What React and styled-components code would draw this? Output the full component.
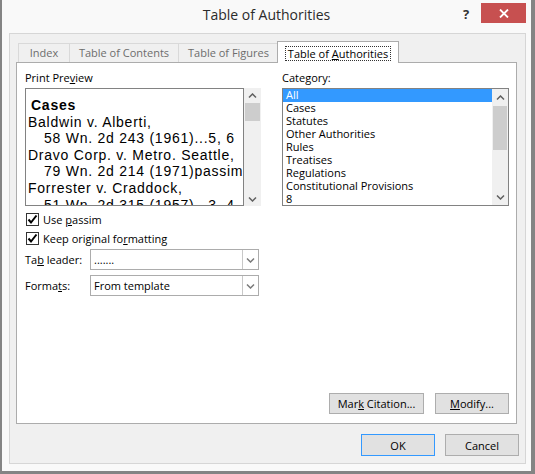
import React from 'react';
import styled, { createGlobalStyle } from 'styled-components';

const GlobalStyle = createGlobalStyle`
  html, body {
    margin: 0;
    padding: 0;
    background: #ffffff;
  }
  body {
    font-family: "Open Sans", "Noto Sans", Arial, sans-serif;
    font-size: 11px;
    color: #000;
  }
`;

const Window = styled.div`
  width: 535px;
  height: 474px;
  box-sizing: border-box;
  background: #f9f9f9;
  border-left: 2px solid #848484;
  border-right: 4px solid #848484;
  border-bottom: 3px solid #848484;
  padding: 0 5px 7px 7px;
  display: flex;
  flex-direction: column;
`;

const TitleBar = styled.div`
  height: 33px;
  flex: none;
  display: grid;
  grid-template-columns: 1fr auto 1fr;
  margin-left: -2px;
`;

const Title = styled.div`
  font-size: 14px;
  color: #2b2b2b;
  line-height: 19px;
  padding-top: 5px;
  white-space: nowrap;
`;

const TitleControls = styled.div`
  display: flex;
  justify-content: flex-end;
  align-items: flex-start;
`;

const HelpButton = styled.div`
  width: 20px;
  margin-right: 5px;
  padding-top: 6px;
  text-align: center;
  font-size: 13px;
  font-weight: 700;
  color: #333;
  line-height: 16px;
`;

const CloseButton = styled.div`
  width: 45px;
  height: 20px;
  margin-top: 3px;
  background: #c75050;
  display: flex;
  align-items: center;
  justify-content: center;
`;

const Frame = styled.div`
  flex: 1;
  box-sizing: border-box;
  background: #f0f0f0;
  border: 1px solid #d6d6d6;
  padding: 7px 7px 7px 6px;
  display: flex;
  flex-direction: column;
`;

const TabRow = styled.div`
  display: flex;
  align-items: flex-end;
  height: 21px;
  padding-left: 2px;
  margin-right: 1px;
  position: relative;
  z-index: 1;
`;

const Tab = styled.div`
  box-sizing: border-box;
  width: ${p => p.$w}px;
  height: ${p => (p.$active ? 22 : 19)}px;
  margin: ${p => (p.$active ? '0 0 -1px -1px' : '0 -1px 0 0')};
  border: 1px solid ${p => (p.$active ? '#acacac' : '#d9d9d9')};
  border-bottom: none;
  background: ${p => (p.$active ? '#ffffff' : '#f0f0f0')};
  color: ${p => (p.$active ? '#000' : '#6d6d6d')};
  display: flex;
  justify-content: center;
  align-items: flex-start;
  padding-top: ${p => (p.$active ? 4 : 0)}px;
  line-height: 18px;
  white-space: nowrap;
  position: relative;
  z-index: ${p => (p.$active ? 2 : 1)};
`;

const FocusLabel = styled.span`
  display: inline-block;
  box-sizing: border-box;
  height: 15px;
  line-height: 13px;
  padding: 0 2px;
  border: 1px dotted #333;
`;

const AccessKey = styled.span`
  text-decoration: underline;
  text-underline-offset: 1px;
`;

const Panel = styled.div`
  box-sizing: border-box;
  height: 362px;
  margin-right: 1px;
  background: #ffffff;
  border: 1px solid #acacac;
  padding: 7px 7px 9px 8px;
  display: flex;
  flex-direction: column;
`;

const Columns = styled.div`
  display: grid;
  grid-template-columns: 236px 227px;
  column-gap: 21px;
  align-items: start;
`;

const Column = styled.div`
  display: flex;
  flex-direction: column;
`;

const FieldLabel = styled.div`
  line-height: 15px;
  height: 15px;
  margin-bottom: 3px;
  white-space: nowrap;
`;

const PreviewRow = styled.div`
  display: flex;
  height: 118px;
`;

const PreviewBox = styled.div`
  box-sizing: border-box;
  width: 219px;
  height: 118px;
  border: 1px solid #828282;
  padding: 8px 0 0 2px;
  overflow: hidden;
  font-family: "Liberation Sans", Arial, sans-serif;
  font-size: 14px;
  letter-spacing: 0.75px;
  line-height: 16.6px;
  color: #000;
`;

const PreviewLine = styled.div`
  white-space: nowrap;
  padding-left: ${p => p.$indent || 0}px;
  font-weight: ${p => (p.$bold ? 700 : 400)};
`;

const ScrollTrack = styled.div`
  box-sizing: border-box;
  width: ${p => p.$w}px;
  height: 100%;
  background: #f0f0f0;
  display: flex;
  flex-direction: column;
  align-items: center;
`;

const ArrowBox = styled.div`
  height: ${p => p.$h}px;
  width: 100%;
  display: flex;
  align-items: center;
  justify-content: center;
  flex: none;
`;

const Thumb = styled.div`
  width: calc(100% - 2px);
  height: ${p => p.$h}px;
  margin-top: ${p => p.$offset}px;
  background: #cdcdcd;
  flex: none;
`;

const TrackFill = styled.div`
  flex: 1;
`;

const ListBox = styled.div`
  box-sizing: border-box;
  height: 118px;
  border: 1px solid #828282;
  display: flex;
  overflow: hidden;
`;

const ListItems = styled.div`
  flex: 1;
  overflow: hidden;
`;

const ListItem = styled.div`
  height: 13px;
  line-height: 12px;
  padding-left: 3px;
  white-space: nowrap;
  background: ${p => (p.$selected ? '#3399ff' : 'transparent')};
  color: ${p => (p.$selected ? '#ffffff' : '#000')};
`;

const Options = styled.div`
  display: flex;
  flex-direction: column;
  margin-top: 5px;
  gap: 2px;
`;

const CheckRow = styled.label`
  display: flex;
  align-items: center;
  height: 17px;
  padding-left: 1px;
  gap: 4px;
  line-height: 15px;
  white-space: nowrap;
`;

const CheckBox = styled.span`
  box-sizing: border-box;
  width: 13px;
  height: 13px;
  border: 1px solid #333;
  background: #fff;
  display: flex;
  align-items: center;
  justify-content: center;
`;

const Selects = styled.div`
  display: flex;
  flex-direction: column;
  gap: 5px;
  margin-top: 2px;
  padding-right: 2px;
`;

const SelectRow = styled.div`
  display: flex;
  align-items: center;
  height: 21px;
`;

const SelectLabel = styled.div`
  width: 65px;
  flex: none;
  white-space: nowrap;
  line-height: 15px;
`;

const Select = styled.div`
  box-sizing: border-box;
  flex: 1;
  height: 21px;
  border: 1px solid #acacac;
  background: #fff;
  display: flex;
`;

const SelectValue = styled.div`
  flex: 1;
  padding-left: 3px;
  line-height: 19px;
  white-space: nowrap;
`;

const SelectArrow = styled.div`
  width: 15px;
  border-left: 1px solid #c8c8c8;
  display: flex;
  align-items: center;
  justify-content: center;
`;

const Spacer = styled.div`
  flex: 1;
`;

const ButtonRow = styled.div`
  display: flex;
  justify-content: flex-end;
  gap: ${p => p.$gap}px;
  margin-top: ${p => p.$top || 0}px;
  margin-right: ${p => p.$right || 0}px;
`;

const Button = styled.div`
  box-sizing: border-box;
  width: ${p => p.$w}px;
  height: ${p => p.$h}px;
  border: 1px solid ${p => (p.$focused ? '#3399ff' : '#adadad')};
  background: #e1e1e1;
  display: flex;
  align-items: center;
  justify-content: center;
  line-height: 15px;
  white-space: nowrap;
`;

const Chevron = ({ down, color = '#606060' }) => (
  <svg width="9" height="6" viewBox="0 0 9 6">
    <polyline
      points={down ? '1,1.5 4.5,5 8,1.5' : '1,4.5 4.5,1 8,4.5'}
      fill="none"
      stroke={color}
      strokeWidth="1.5"
    />
  </svg>
);

const Check = () => (
  <svg width="11" height="11" viewBox="0 0 11 11">
    <polyline points="1.5,5.5 4,8.5 9.5,1.5" fill="none" stroke="#000" strokeWidth="2" />
  </svg>
);

const ScrollBar = ({ w, arrowH, thumbH, offset }) => (
  <ScrollTrack $w={w}>
    <ArrowBox $h={arrowH}><Chevron /></ArrowBox>
    <Thumb $h={thumbH} $offset={offset} />
    <TrackFill />
    <ArrowBox $h={arrowH}><Chevron down /></ArrowBox>
  </ScrollTrack>
);

const previewLines = [
  { text: 'Cases', bold: true, indent: 3 },
  { text: 'Baldwin v. Alberti,' },
  { text: '58 Wn. 2d 243 (1961)...5, 6', indent: 16 },
  { text: 'Dravo Corp. v. Metro. Seattle,' },
  { text: '79 Wn. 2d 214 (1971)passim', indent: 16 },
  { text: 'Forrester v. Craddock,' },
  { text: '51 Wn. 2d 315 (1957)...3, 4', indent: 16 },
];

const categories = [
  'All',
  'Cases',
  'Statutes',
  'Other Authorities',
  'Rules',
  'Treatises',
  'Regulations',
  'Constitutional Provisions',
  '8',
];

export default function App() {
  return (
    <>
      <GlobalStyle />
      <Window>
        <TitleBar>
          <div />
          <Title>Table of Authorities</Title>
          <TitleControls>
            <HelpButton>?</HelpButton>
            <CloseButton>
              <svg width="10" height="9" viewBox="0 0 10 9">
                <path d="M1 0.5 L9 8.5 M9 0.5 L1 8.5" stroke="#fff" strokeWidth="1.8" />
              </svg>
            </CloseButton>
          </TitleControls>
        </TitleBar>

        <Frame>
          <TabRow>
            <Tab $w={52}>Index</Tab>
            <Tab $w={110}>Table of Contents</Tab>
            <Tab $w={101}>Table of Figures</Tab>
            <Tab $w={122} $active>
              <FocusLabel>Table of <AccessKey>A</AccessKey>uthorities</FocusLabel>
            </Tab>
          </TabRow>

          <Panel>
            <Columns>
              <Column>
                <FieldLabel>Print Pre<AccessKey>v</AccessKey>iew</FieldLabel>
                <PreviewRow>
                  <PreviewBox>
                    {previewLines.map((l, i) => (
                      <PreviewLine key={i} $bold={l.bold} $indent={l.indent}>{l.text}</PreviewLine>
                    ))}
                  </PreviewBox>
                  <ScrollBar w={17} arrowH={15} thumbH={18} offset={0} />
                </PreviewRow>

                <Options>
                  <CheckRow>
                    <CheckBox><Check /></CheckBox>
                    <span>Use <AccessKey>p</AccessKey>assim</span>
                  </CheckRow>
                  <CheckRow>
                    <CheckBox><Check /></CheckBox>
                    <span>Keep original fo<AccessKey>r</AccessKey>matting</span>
                  </CheckRow>
                </Options>

                <Selects>
                  <SelectRow>
                    <SelectLabel>Ta<AccessKey>b</AccessKey> leader:</SelectLabel>
                    <Select>
                      <SelectValue>.......</SelectValue>
                      <SelectArrow><Chevron down color="#7a7a7a" /></SelectArrow>
                    </Select>
                  </SelectRow>
                  <SelectRow>
                    <SelectLabel>Forma<AccessKey>t</AccessKey>s:</SelectLabel>
                    <Select>
                      <SelectValue>From template</SelectValue>
                      <SelectArrow><Chevron down color="#7a7a7a" /></SelectArrow>
                    </Select>
                  </SelectRow>
                </Selects>
              </Column>

              <Column>
                <FieldLabel>Cate<AccessKey>g</AccessKey>ory:</FieldLabel>
                <ListBox>
                  <ListItems>
                    {categories.map((c, i) => (
                      <ListItem key={c} $selected={i === 0}>{c}</ListItem>
                    ))}
                  </ListItems>
                  <ScrollBar w={16} arrowH={17} thumbH={44} offset={0} />
                </ListBox>
              </Column>
            </Columns>

            <Spacer />

            <ButtonRow $gap={11}>
              <Button $w={95} $h={21}>Mar<AccessKey>k</AccessKey>&nbsp;Citation...</Button>
              <Button $w={74} $h={21}><AccessKey>M</AccessKey>odify...</Button>
            </ButtonRow>
          </Panel>

          <ButtonRow $gap={10} $top={10} $right={-1}>
            <Button $w={74} $h={22} $focused>OK</Button>
            <Button $w={74} $h={22}>Cancel</Button>
          </ButtonRow>
        </Frame>
      </Window>
    </>
  );
}
